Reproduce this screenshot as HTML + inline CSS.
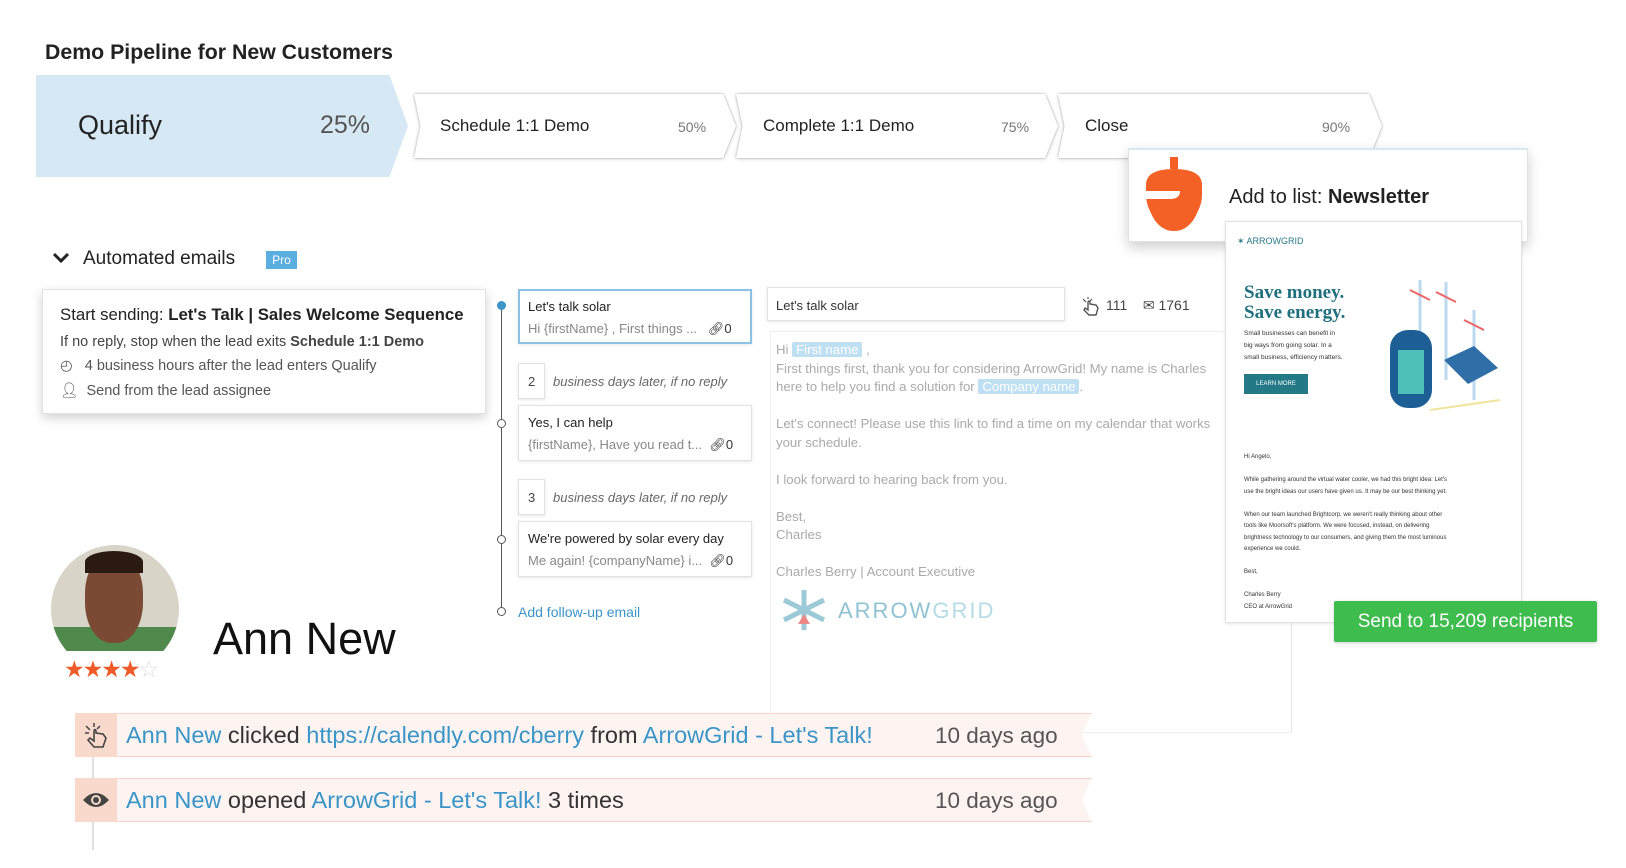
<!DOCTYPE html>
<html><head><meta charset="utf-8"><style>
*{box-sizing:border-box;margin:0;padding:0}
body{width:1626px;height:868px;background:#fff;font-family:"Liberation Sans",sans-serif;position:relative;overflow:hidden;color:#222}
.a{position:absolute;white-space:nowrap}
.cw{position:absolute;filter:drop-shadow(0 0 1px rgba(0,0,0,.35)) drop-shadow(0 1px 2px rgba(0,0,0,.12))}
.cw div{width:100%;height:100%;background:#fff;clip-path:polygon(0 0,96% 0,100% 50%,96% 100%,0 100%,2% 50%)}
.card{position:absolute;background:#fff;border:1px solid #e2e2e2;box-shadow:0 1px 3px rgba(0,0,0,.1)}
.blue{color:#3a95c9}
.hl{background:#bfe0f3;color:#fff;padding:0 4px;border-radius:2px}
</style></head><body>
<div class="a" style="left:45px;top:40px;font-size:21.3px;font-weight:bold;color:#222">Demo Pipeline for New Customers</div>

<div class="a" style="left:36px;top:75px;width:372px;height:102px;background:#d6e8f3;clip-path:polygon(0 0,95% 0,100% 50%,95% 100%,0 100%);box-shadow:0 2px 3px rgba(0,0,0,.1)"></div>
<div class="a" style="left:78px;top:110px;font-size:27px;color:#222">Qualify</div>
<div class="a" style="left:320px;top:111px;font-size:25px;color:#555">25%</div>

<div class="cw" style="left:414px;top:94px;width:322px;height:64px"><div></div></div>
<div class="a" style="left:440px;top:116px;font-size:17px">Schedule 1:1 Demo</div>
<div class="a" style="left:678px;top:119px;font-size:14px;color:#777">50%</div>
<div class="cw" style="left:736px;top:94px;width:322px;height:64px"><div></div></div>
<div class="a" style="left:763px;top:116px;font-size:17px">Complete 1:1 Demo</div>
<div class="a" style="left:1001px;top:119px;font-size:14px;color:#777">75%</div>
<div class="cw" style="left:1058px;top:94px;width:324px;height:64px"><div></div></div>
<div class="a" style="left:1085px;top:116px;font-size:17px">Close</div>
<div class="a" style="left:1322px;top:119px;font-size:14px;color:#777">90%</div>

<svg class="a" style="left:52px;top:251px" width="18" height="14"><path d="M2 3 L9 10 L16 3" stroke="#222" stroke-width="3" fill="none"/></svg>
<div class="a" style="left:83px;top:248px;font-size:19px">Automated emails</div>
<div class="a" style="left:266px;top:251px;width:31px;height:18px;background:#5aaee0;color:#fff;font-size:12px;text-align:center;line-height:18px">Pro</div>

<div class="card" style="left:42px;top:289px;width:444px;height:125px;box-shadow:0 4px 10px rgba(0,0,0,.18)"></div>
<div class="a" style="left:60px;top:305px;font-size:16.8px">Start sending: <b>Let's Talk | Sales Welcome Sequence</b></div>
<div class="a" style="left:60px;top:334px;font-size:14.5px;color:#444">If no reply, stop when the lead exits <b>Schedule 1:1 Demo</b></div>
<div class="a" style="left:60px;top:358px;font-size:14.5px;color:#555">◴ &nbsp; 4 business hours after the lead enters Qualify</div>
<div class="a" style="left:60px;top:382px;font-size:14.5px;color:#555">👤&#xFE0E; &nbsp;Send from the lead assignee</div>

<div class="a" style="left:501px;top:305px;width:1px;height:307px;background:#555"></div>
<div class="a" style="left:497px;top:301px;width:9px;height:9px;border-radius:50%;background:#3a95c9"></div>
<div class="a" style="left:497px;top:419px;width:9px;height:9px;border-radius:50%;background:#fff;border:1px solid #555"></div>
<div class="a" style="left:497px;top:535px;width:9px;height:9px;border-radius:50%;background:#fff;border:1px solid #555"></div>
<div class="a" style="left:497px;top:607px;width:9px;height:9px;border-radius:50%;background:#fff;border:1px solid #555"></div>

<div class="card" style="left:518px;top:289px;width:234px;height:55px;border:2px solid #8cc2e6"></div>
<div class="a" style="left:528px;top:299px;font-size:13px">Let's talk solar</div>
<div class="a" style="left:528px;top:321px;font-size:13px;color:#888">Hi {firstName} , First things ...&nbsp;&nbsp; <span style="color:#333">🔗&#xFE0E;0</span></div>
<div class="card" style="left:518px;top:363px;width:27px;height:36px"></div>
<div class="a" style="left:528px;top:374px;font-size:13px;color:#444">2</div>
<div class="a" style="left:553px;top:374px;font-size:13px;color:#666;font-style:italic">business days later, if no reply</div>
<div class="card" style="left:518px;top:405px;width:234px;height:56px"></div>
<div class="a" style="left:528px;top:415px;font-size:13px">Yes, I can help</div>
<div class="a" style="left:528px;top:437px;font-size:13px;color:#888">{firstName}, Have you read t...&nbsp; <span style="color:#333">🔗&#xFE0E;0</span></div>
<div class="card" style="left:518px;top:479px;width:27px;height:36px"></div>
<div class="a" style="left:528px;top:490px;font-size:13px;color:#444">3</div>
<div class="a" style="left:553px;top:490px;font-size:13px;color:#666;font-style:italic">business days later, if no reply</div>
<div class="card" style="left:518px;top:521px;width:234px;height:56px"></div>
<div class="a" style="left:528px;top:531px;font-size:13px">We're powered by solar every day</div>
<div class="a" style="left:528px;top:553px;font-size:13px;color:#888">Me again! {companyName} i...&nbsp; <span style="color:#333">🔗&#xFE0E;0</span></div>
<div class="a blue" style="left:518px;top:604px;font-size:14px">Add follow-up email</div>

<div class="a" style="left:770px;top:331px;width:522px;height:402px;border:1px solid #eee;border-right:1px solid #e5e5e5"></div>
<div class="card" style="left:767px;top:287px;width:298px;height:34px"></div>
<div class="a" style="left:776px;top:298px;font-size:13px;color:#333">Let's talk solar</div>
<svg class="a" style="left:1080px;top:296px" width="22" height="20"><path d="M8 6V14L5 12 4 14 9 19H16L18 12 16 9 10 8V6Q9 4 8 6Z" fill="none" stroke="#555" stroke-width="1.4"/><path d="M3 3L6 6M8 1V3M12 3L10 5" stroke="#555" stroke-width="1.2"/></svg>
<div class="a" style="left:1106px;top:297px;font-size:14px;color:#444">111 &nbsp;&nbsp; ✉&#xFE0E; 1761</div>
<div class="a" style="left:776px;top:341px;font-size:13.2px;color:#aaa;line-height:18.5px">Hi <span class="hl">First name</span> ,<br>First things first, thank you for considering ArrowGrid! My name is Charles<br>here to help you find a solution for <span class="hl">Company name</span>.<br><br>Let's connect! Please use this link to find a time on my calendar that works<br>your schedule.<br><br>I look forward to hearing back from you.<br><br>Best,<br>Charles<br><br>Charles Berry | Account Executive</div>
<svg class="a" style="left:780px;top:588px" width="48" height="44"><g stroke="#9cc9d6" stroke-width="5"><path d="M24 2V42M4 12L44 32M4 32L44 12"/></g><path d="M24 26L18 36H30Z" fill="#e88"/></svg>
<div class="a" style="left:838px;top:598px;font-size:22px;letter-spacing:2px;color:#8fc3d3">ARROW<span style="color:#b5dbe6">GRID</span></div>

<div class="card" style="left:1128px;top:148px;width:400px;height:94px;box-shadow:0 5px 12px rgba(0,0,0,.2);border-top:2px solid #d6e8f3"></div>
<svg class="a" style="left:1140px;top:155px" width="68" height="78"><path d="M30 2H38V14H30Z" fill="#f36127"/><path d="M6 30Q6 14 34 14Q62 14 62 30V40Q62 48 58 56Q50 76 34 76Q18 76 10 56Q6 48 6 40Z" fill="#f36127"/><path d="M2 36H40Q40 44 30 44H6Z" fill="#fff"/></svg>
<div class="a" style="left:1229px;top:186px;font-size:20px">Add to list: <b>Newsletter</b></div>

<div class="card" style="left:1225px;top:221px;width:297px;height:402px"></div>
<div class="a" style="left:1237px;top:236px;font-size:9px;color:#2a7a8a">✶ ARROWGRID</div>
<div class="a" style="left:1244px;top:283px;font-family:'Liberation Serif',serif;font-size:19px;font-weight:bold;color:#1f6f7f;line-height:20px">Save money.<br>Save energy.</div>
<div class="a" style="left:1244px;top:328px;font-size:6.5px;color:#333;line-height:12px">Small businesses can benefit in<br>big ways from going solar. In a<br>small business, efficiency matters.</div>
<div class="a" style="left:1244px;top:374px;width:64px;height:20px;background:#237a86;color:#fff;font-size:6px;text-align:center;line-height:20px">LEARN MORE</div>
<svg class="a" style="left:1380px;top:270px" width="140" height="160"><g stroke="#bcd9ee" stroke-width="3"><path d="M40 10V100M66 12V110M94 40V130"/></g><path d="M30 20l20 10M56 22l20 10M84 50l20 10" stroke="#e66" stroke-width="2"/><rect x="10" y="60" width="42" height="78" rx="18" fill="#1d5f95"/><rect x="18" y="80" width="26" height="44" fill="#4fc0b8"/><path d="M64 90l30-14 24 22-30 16Z" fill="#2f6ea6"/><path d="M50 140l70-10" stroke="#f1e39a" stroke-width="2"/></svg>
<div class="a" style="left:1244px;top:452px;font-size:6px;color:#333;line-height:11.5px">Hi Angelo,<br><br>While gathering around the virtual water cooler, we had this bright idea: Let's<br>use the bright ideas our users have given us. It may be our best thinking yet.<br><br>When our team launched Brightcorp, we weren't really thinking about other<br>tools like Moorsoft's platform. We were focused, instead, on delivering<br>brightness technology to our consumers, and giving them the most luminous<br>experience we could.<br><br>Best,<br><br>Charles Berry<br>CEO at ArrowGrid</div>
<div class="a" style="left:1334px;top:601px;width:263px;height:41px;background:#3fbc4e;color:#fff;font-size:19px;text-align:center;line-height:41px;border-radius:2px;box-shadow:0 1px 3px rgba(0,0,0,.2)">Send to 15,209 recipients</div>

<div class="a" style="left:51px;top:545px;width:128px;height:128px;border-radius:50%;overflow:hidden;background:#d9d4c8;clip-path:inset(0 0 22px 0)">
 <div style="position:absolute;left:0;top:82px;width:128px;height:50px;background:#4f8a4c"></div>
 <div style="position:absolute;left:34px;top:8px;width:58px;height:90px;border-radius:45%;background:#7a4a34"></div>
 <div style="position:absolute;left:34px;top:6px;width:58px;height:22px;border-radius:50% 50% 0 0;background:#2a1a12"></div>
</div>
<div class="a" style="left:64px;top:656px;font-size:23px;letter-spacing:-2px;color:#f05a28">★★★★<span style="color:#ddd">☆</span></div>
<div class="a" style="left:213px;top:613px;font-size:45px;color:#111">Ann New</div>

<div class="a" style="left:92px;top:757px;width:2px;height:24px;background:#e0e0e0"></div>
<div class="a" style="left:92px;top:820px;width:2px;height:30px;background:#e0e0e0"></div>
<div class="a" style="left:75px;top:713px;width:1017px;height:44px;background:#fdf3f0;border:1px solid #f6d4c7;clip-path:polygon(0 0,100% 0,99% 50%,100% 100%,0 100%)"></div>
<div class="a" style="left:75px;top:713px;width:42px;height:44px;background:#f8d9cc"></div>
<svg class="a" style="left:83px;top:722px" width="28" height="28"><path d="M11 9V19L7 16 5 18 11 25H20L23 16 20 12 13 11V9Q12 6 11 9Z" fill="none" stroke="#444" stroke-width="1.6"/><path d="M3 4L7 8M11 1V5M17 4L14 7M2 11H6" stroke="#444" stroke-width="1.5"/></svg>
<div class="a" style="left:126px;top:722px;font-size:23.5px;color:#333"><span class="blue">Ann New</span> clicked <span class="blue">https://calendly.com/cberry</span> from <span class="blue">ArrowGrid - Let's Talk!</span></div>
<div class="a" style="left:935px;top:723px;font-size:22.5px;color:#555">10 days ago</div>
<div class="a" style="left:75px;top:778px;width:1017px;height:44px;background:#fdf3f0;border:1px solid #f6d4c7;clip-path:polygon(0 0,100% 0,99% 50%,100% 100%,0 100%)"></div>
<div class="a" style="left:75px;top:778px;width:42px;height:44px;background:#f8d9cc"></div>
<svg class="a" style="left:82px;top:790px" width="28" height="20"><path d="M1 10Q14 -4 27 10Q14 24 1 10Z" fill="#444"/><circle cx="14" cy="10" r="5" fill="#f8d9cc"/><circle cx="14" cy="10" r="3" fill="#444"/></svg>
<div class="a" style="left:126px;top:787px;font-size:23.5px;color:#333"><span class="blue">Ann New</span> opened <span class="blue">ArrowGrid - Let's Talk!</span> 3 times</div>
<div class="a" style="left:935px;top:788px;font-size:22.5px;color:#555">10 days ago</div>
</body></html>
